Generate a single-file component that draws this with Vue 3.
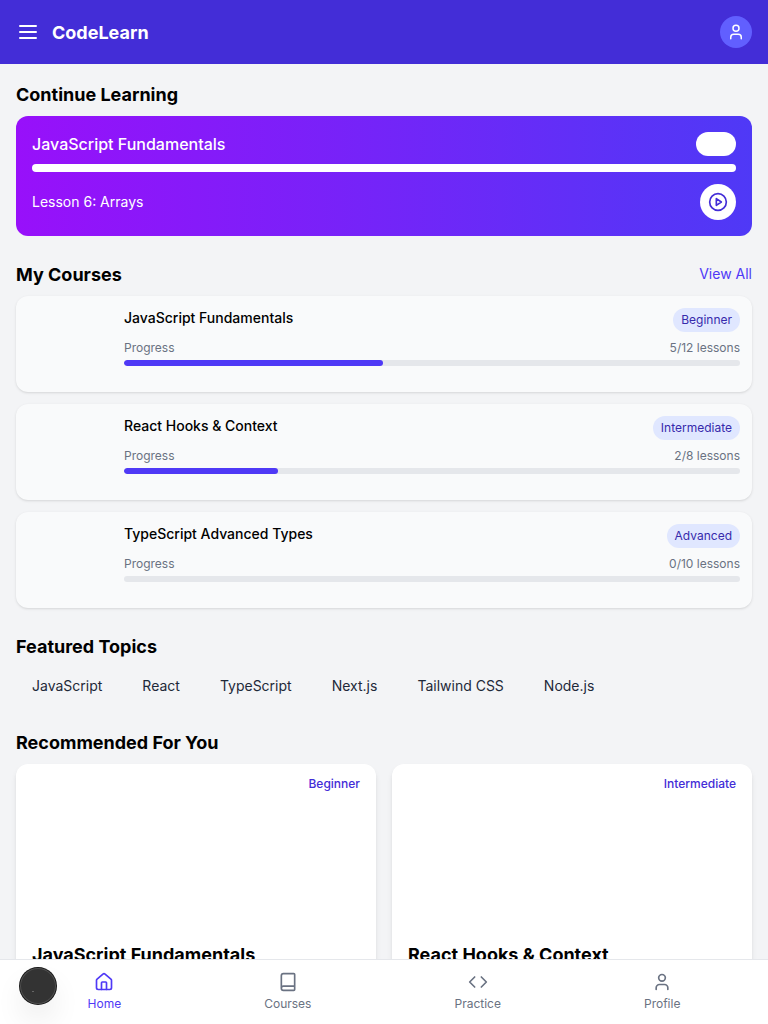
<script setup>
const courses = [
  { title: 'JavaScript Fundamentals', level: 'Beginner', done: 5, total: 12, progress: 42 },
  { title: 'React Hooks & Context', level: 'Intermediate', done: 2, total: 8, progress: 25 },
  { title: 'TypeScript Advanced Types', level: 'Advanced', done: 0, total: 10, progress: 0 },
]
const topics = ['JavaScript', 'React', 'TypeScript', 'Next.js', 'Tailwind CSS', 'Node.js']
const tabs = [
  {
    label: 'Home',
    paths: [
      'M15 21v-8a1 1 0 0 0-1-1h-4a1 1 0 0 0-1 1v8',
      'M3 10a2 2 0 0 1 .709-1.528l7-5.999a2 2 0 0 1 2.582 0l7 5.999A2 2 0 0 1 21 10v9a2 2 0 0 1-2 2H5a2 2 0 0 1-2-2z',
    ],
  },
  {
    label: 'Courses',
    paths: ['M4 19.5v-15A2.5 2.5 0 0 1 6.5 2H19a1 1 0 0 1 1 1v18a1 1 0 0 1-1 1H6.5a1 1 0 0 1 0-5H20'],
  },
  { label: 'Practice', paths: ['m16 18 6-6-6-6', 'm8 6-6 6 6 6'] },
  {
    label: 'Profile',
    paths: ['M19 21v-2a4 4 0 0 0-4-4H9a4 4 0 0 0-4 4v2', 'M16 7a4 4 0 1 1-8 0a4 4 0 0 1 8 0z'],
  },
]
</script>

<template>
  <div class="app">
    <header class="header">
      <div class="brand">
        <svg class="icon" width="24" height="24" viewBox="0 0 24 24">
          <path d="M4 6h16M4 12h16M4 18h16" />
        </svg>
        <h1>CodeLearn</h1>
      </div>
      <div class="avatar">
        <svg class="icon" width="18" height="18" viewBox="0 0 24 24">
          <path d="M19 21v-2a4 4 0 0 0-4-4H9a4 4 0 0 0-4 4v2" />
          <circle cx="12" cy="7" r="4" />
        </svg>
      </div>
    </header>

    <main class="main">
      <section>
        <h2>Continue Learning</h2>
        <div class="continue">
          <div class="row">
            <h3>JavaScript Fundamentals</h3>
            <span class="pill"></span>
          </div>
          <div class="continue-bar"></div>
          <div class="row">
            <p>Lesson 6: Arrays</p>
            <button class="play" aria-label="Play">
              <svg class="icon" width="20" height="20" viewBox="0 0 24 24">
                <circle cx="12" cy="12" r="10" />
                <polygon points="10 8 16 12 10 16 10 8" />
              </svg>
            </button>
          </div>
        </div>
      </section>

      <section>
        <div class="heading">
          <h2>My Courses</h2>
          <a class="view-all">View All</a>
        </div>
        <div class="courses">
          <article v-for="c in courses" :key="c.title" class="course">
            <div class="thumb"></div>
            <div class="course-body">
              <div class="course-top">
                <h3>{{ c.title }}</h3>
                <span class="badge">{{ c.level }}</span>
              </div>
              <div class="row meta">
                <span>Progress</span>
                <span>{{ c.done }}/{{ c.total }} lessons</span>
              </div>
              <div class="track">
                <div class="fill" :style="{ width: c.progress + '%' }"></div>
              </div>
            </div>
          </article>
        </div>
      </section>

      <section>
        <h2>Featured Topics</h2>
        <div class="topics">
          <span v-for="t in topics" :key="t" class="topic">{{ t }}</span>
        </div>
      </section>

      <section>
        <h2>Recommended For You</h2>
        <div class="grid">
          <article v-for="c in courses.slice(0, 2)" :key="c.title" class="rec">
            <div class="rec-media">
              <span class="rec-level">{{ c.level }}</span>
            </div>
            <h3>{{ c.title }}</h3>
          </article>
        </div>
      </section>
    </main>

    <nav class="tabs">
      <a v-for="(t, i) in tabs" :key="t.label" class="tab" :class="{ active: i === 0 }">
        <svg class="icon" width="20" height="20" viewBox="0 0 24 24">
          <path v-for="d in t.paths" :key="d" :d="d" />
        </svg>
        <span>{{ t.label }}</span>
      </a>
    </nav>
    <div class="floating"><i></i></div>
  </div>
</template>

<style>
body {
  margin: 0;
  background: #f3f4f6;
}
</style>

<style scoped>
* {
  box-sizing: border-box;
}
.app {
  position: relative;
  height: 100vh;
  overflow: hidden;
  background: #f3f4f6;
  color: #000;
  font-family: Inter, sans-serif;
  font-size: 14px;
  line-height: 20px;
}
h1, h2, h3, p {
  margin: 0;
}
.icon {
  display: block;
  fill: none;
  stroke: currentColor;
  stroke-width: 2;
  stroke-linecap: round;
  stroke-linejoin: round;
}
.header {
  display: flex;
  align-items: center;
  justify-content: space-between;
  height: 64px;
  padding: 0 16px;
  background: #432dd7;
  color: #fff;
}
.brand {
  display: flex;
  align-items: center;
  gap: 12px;
}
h1, h2 {
  font-size: 18px;
  line-height: 28px;
  font-weight: 700;
}
h1 {
  padding-top: 2px;
}
.avatar {
  display: grid;
  place-items: center;
  width: 32px;
  height: 32px;
  border-radius: 50%;
  background: #615fff;
}
.main {
  padding: 16px;
}
section {
  margin-bottom: 24px;
}
h2 {
  padding-top: 1px;
  margin-bottom: 7px;
}
.row {
  display: flex;
  align-items: center;
  justify-content: space-between;
}
.continue {
  padding: 16px;
  border-radius: 12px;
  background: linear-gradient(to right, #9810fa, #4f39f6);
  color: #fff;
}
.continue h3 {
  font-size: 16px;
  line-height: 24px;
  font-weight: 500;
}
.pill {
  width: 39.6px;
  height: 24px;
  border-radius: 12px;
  background: #fff;
}
.continue-bar {
  height: 8px;
  margin: 8px 0 12px;
  border-radius: 4px;
  background: #fff;
}
.play {
  display: grid;
  place-items: center;
  width: 36px;
  height: 36px;
  padding: 0;
  border: 0;
  border-radius: 50%;
  background: #fff;
  color: #432dd7;
}
.heading {
  display: flex;
  align-items: flex-start;
  justify-content: space-between;
}
.view-all {
  padding-top: 4px;
  color: #4f39f6;
}
.courses {
  display: grid;
  gap: 12px;
}
.course {
  display: flex;
  height: 96px;
  border-radius: 12px;
  background: #f9fafb;
  box-shadow: 0 1px 3px rgba(0, 0, 0, 0.1), 0 1px 2px -1px rgba(0, 0, 0, 0.1);
}
.thumb {
  flex: none;
  width: 96px;
}
.course-body {
  flex: 1;
  padding: 12px;
}
.course-top {
  display: flex;
  align-items: flex-start;
  justify-content: space-between;
}
.course h3 {
  font-size: 14px;
  font-weight: 500;
}
.badge {
  padding: 4px 8px;
  border-radius: 12px;
  background: #e0e7ff;
  color: #372aac;
  font-size: 12px;
  line-height: 16px;
}
.meta {
  margin: 8px 0 4px;
  color: #6a7282;
  font-size: 12px;
  line-height: 16px;
}
.track {
  height: 6px;
  overflow: hidden;
  border-radius: 3px;
  background: #e5e7eb;
}
.fill {
  height: 6px;
  border-radius: 3px;
  background: #4f39f6;
}
.topics {
  display: flex;
  gap: 8px;
}
.topic {
  padding: 8px 16px;
  color: #1e2939;
}
.grid {
  display: grid;
  grid-template-columns: 1fr 1fr;
  gap: 16px;
}
.rec {
  height: 290px;
  border-radius: 12px;
  background: #fff;
  box-shadow: 0 4px 6px -1px rgba(0, 0, 0, 0.1), 0 2px 4px -2px rgba(0, 0, 0, 0.1);
}
.rec-media {
  display: flex;
  align-items: flex-start;
  justify-content: flex-end;
  height: 160px;
  padding: 8px;
}
.rec-level {
  padding: 4px 8px;
  color: #432dd7;
  font-size: 12px;
  line-height: 16px;
  font-weight: 500;
}
.rec h3 {
  padding: 17px 16px 16px;
  font-size: 18px;
  line-height: 28px;
  font-weight: 700;
}
.tabs {
  position: absolute;
  right: 0;
  bottom: 0;
  left: 0;
  display: flex;
  justify-content: space-around;
  height: 65px;
  padding: 12px 16px;
  border-top: 1px solid #e5e7eb;
  background: #fff;
}
.tab {
  display: flex;
  flex-direction: column;
  align-items: center;
  gap: 4px;
  color: #6a7282;
  font-size: 12px;
  line-height: 16px;
}
.active {
  color: #4f39f6;
}
.floating {
  position: absolute;
  bottom: 20px;
  left: 20px;
  width: 36px;
  height: 36px;
  border-radius: 50%;
  background: #333;
  box-shadow: 0 0 0 1px #171717, inset 0 0 0 1px rgba(255, 255, 255, 0.14), 0 16px 32px -8px rgba(0, 0, 0, 0.24);
}
.floating i {
  position: absolute;
  top: 23px;
  left: 12px;
  width: 2px;
  height: 1px;
  background: #666;
}
</style>
